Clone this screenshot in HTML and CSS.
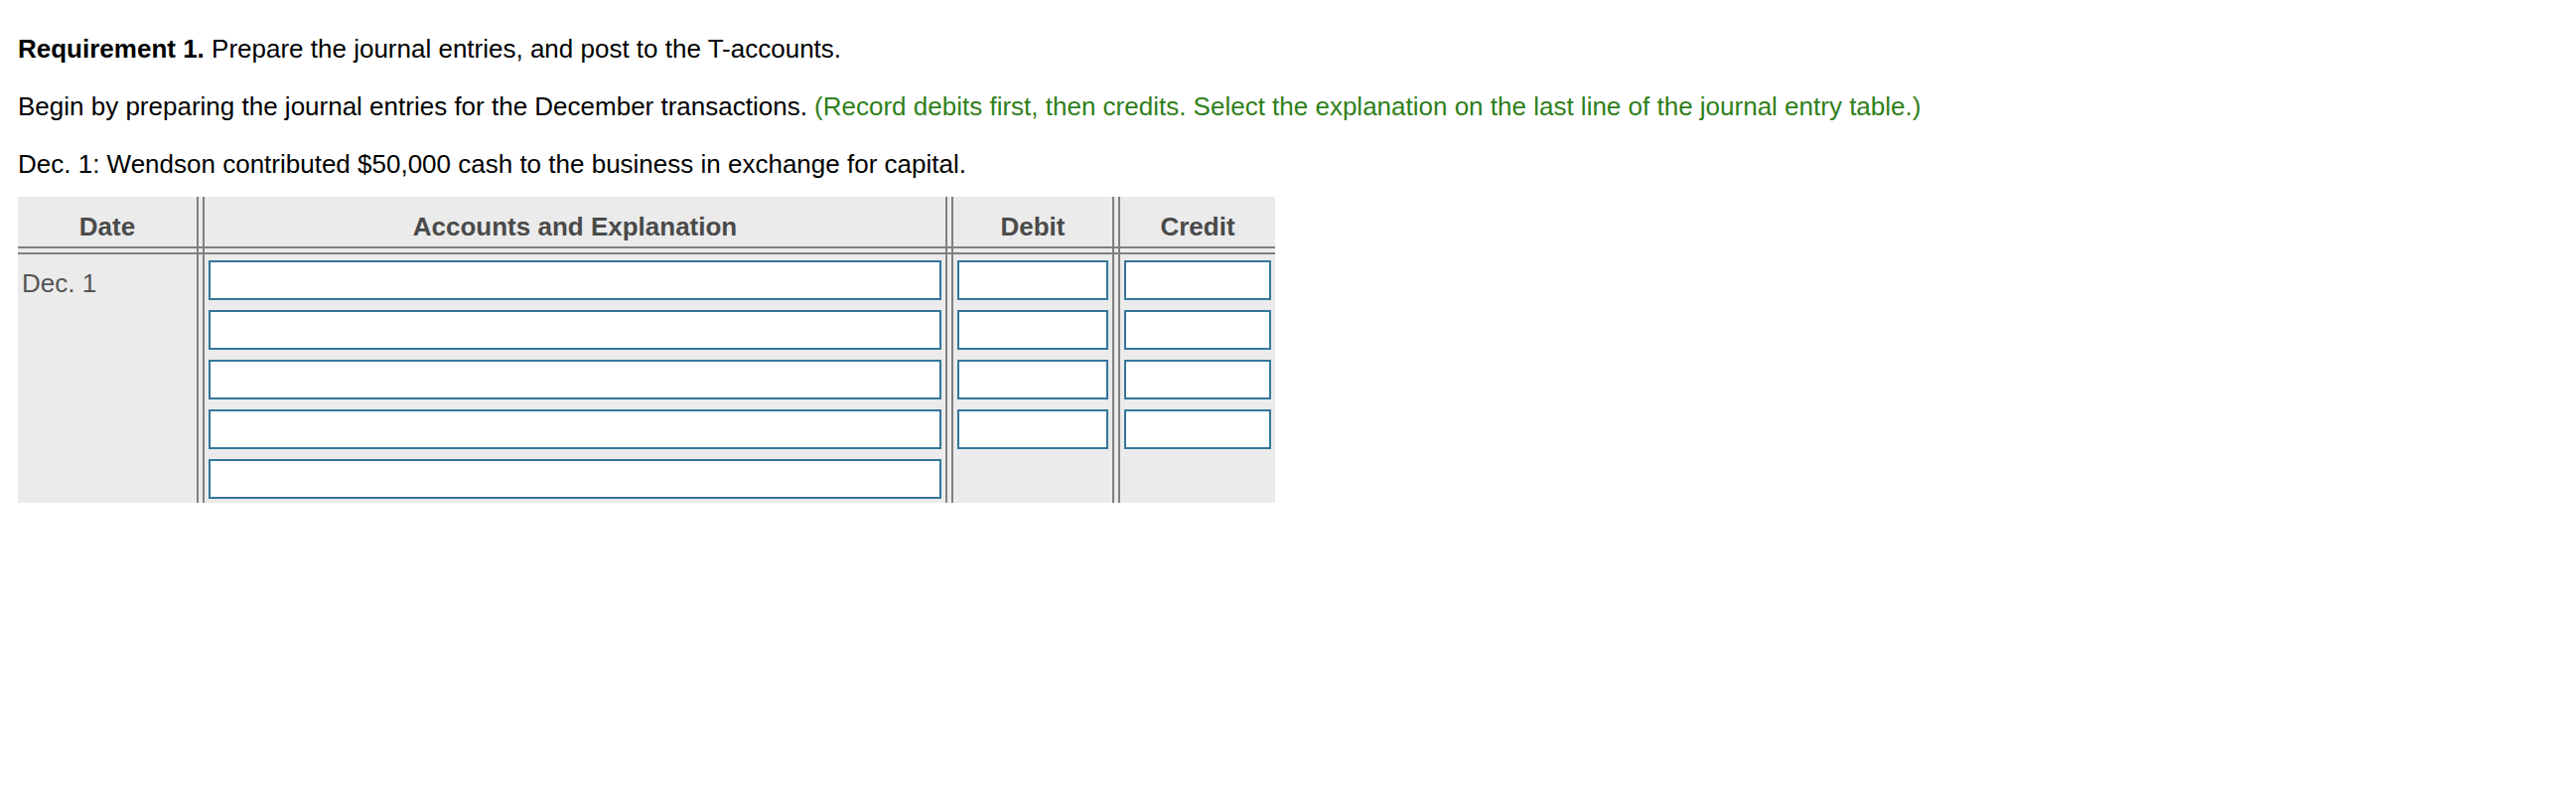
FILE: index.html
```html
<!DOCTYPE html>
<html lang="en">
<head>
  <meta charset="UTF-8">
  <meta name="viewport" content="width=device-width, initial-scale=1.0">
  <title>Journal Entries - Requirement 1</title>
  <link rel="stylesheet" href="styles.css">
</head>
<body>
  <div class="page">
    <p class="line"><b>Requirement 1.</b> Prepare the journal entries, and post to the T-accounts.</p>
    <p class="line">Begin by preparing the journal entries for the December transactions. <span class="hint">(Record debits first, then credits. Select the explanation on the last line of the journal entry table.)</span></p>
    <p class="line last">Dec. 1: Wendson contributed $50,000 cash to the business in exchange for capital.</p>

    <div class="journal">
      <div class="head col-date">Date</div>
      <div class="sep sep-1"></div>
      <div class="head col-acct">Accounts and Explanation</div>
      <div class="sep sep-2"></div>
      <div class="head col-debit">Debit</div>
      <div class="sep sep-3"></div>
      <div class="head col-credit">Credit</div>

      <div class="rule"></div>

      <div class="cell date-cell col-date">Dec. 1</div>
      <div class="cell inputs col-acct">
        <input type="text">
        <input type="text">
        <input type="text">
        <input type="text">
        <input type="text">
      </div>
      <div class="cell inputs col-debit">
        <input type="text">
        <input type="text">
        <input type="text">
        <input type="text">
      </div>
      <div class="cell inputs col-credit">
        <input type="text">
        <input type="text">
        <input type="text">
        <input type="text">
      </div>
    </div>
  </div>
</body>
</html>
```

FILE: styles.css
```css
* {
  margin: 0;
  padding: 0;
  box-sizing: border-box;
}

body {
  font-family: "Liberation Sans", Arial, sans-serif;
  font-size: 26px;
  color: #000;
  background-color: #fff;
}

.page {
  padding: 34px 18px 0 18px;
}

.line {
  line-height: 30px;
  margin-bottom: 28px;
}

.line.last {
  margin-bottom: 18px;
}

.hint {
  color: #2f7f1a;
}

/* journal entry table */
.journal {
  display: grid;
  grid-template-columns: 180px 8px 746px 8px 160px 8px 156px;
  grid-template-rows: 50px 8px 250px;
  width: 1266px;
  background-color: #ebebeb;
}

.col-date { grid-column: 1; }
.col-acct { grid-column: 3; }
.col-debit { grid-column: 5; }
.col-credit { grid-column: 7; }

.head {
  grid-row: 1;
  padding-top: 15px;
  line-height: 30px;
  text-align: center;
  font-weight: bold;
  color: #4a4a4a;
}

.sep {
  grid-row: 1 / 4;
  border-left: 2px solid #808080;
  border-right: 2px solid #808080;
}

.sep-1 { grid-column: 2; }
.sep-2 { grid-column: 4; }
.sep-3 { grid-column: 6; }

.rule {
  grid-row: 2;
  grid-column: 1 / 8;
  border-top: 2px solid #808080;
  border-bottom: 2px solid #808080;
}

.cell {
  grid-row: 3;
}

.date-cell {
  padding: 14px 4px 0 4px;
  line-height: 30px;
  color: #555;
}

.inputs {
  display: flex;
  flex-direction: column;
  gap: 10px;
  padding: 6px 4px 4px 4px;
}

.inputs input {
  display: block;
  width: 100%;
  height: 40px;
  border: 2px solid #33769b;
  background-color: #fff;
  font-family: inherit;
  font-size: 22px;
  padding: 0 6px;
  outline: none;
}
```
